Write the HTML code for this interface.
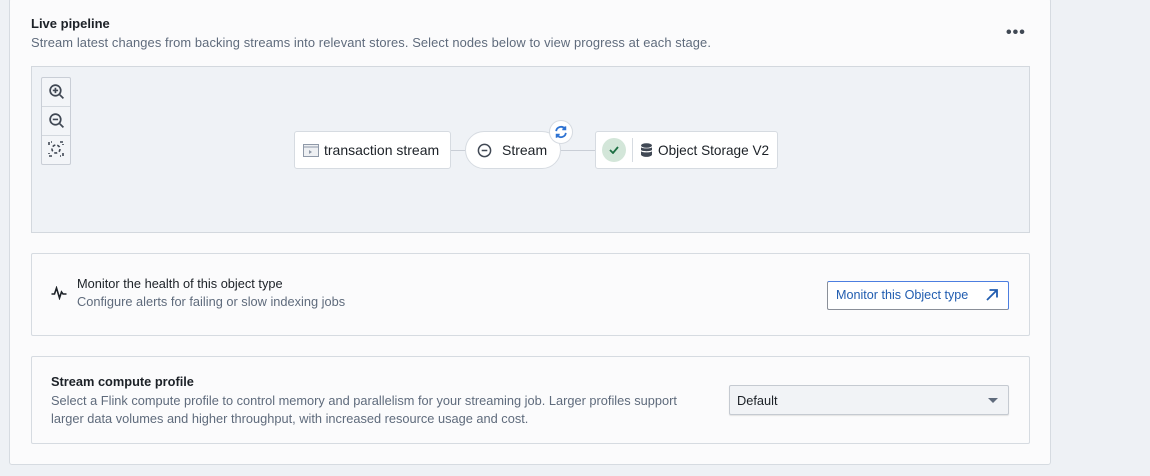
<!DOCTYPE html>
<html><head><style>
*{box-sizing:border-box;margin:0;padding:0}
body{width:1150px;height:476px;background:#eef1f5;font-family:"Liberation Sans",sans-serif;color:#1c2127;position:relative;overflow:hidden;font-size:13px}
.a{position:absolute}
.card{left:9px;top:-2px;width:1042px;height:467px;background:#fbfbfc;border:1px solid #d6dbe1;border-radius:3px}
.box{background:#fbfbfc;border:1px solid #d6dbe1;border-radius:2px}
.muted{color:#5f6b7c}
.node{background:#fff;border:1px solid #d6dbe1;border-radius:3px;display:flex;align-items:center;font-size:14px}
</style></head><body>
<div class="a card"></div>
<div class="a" style="left:31px;top:16px;font-weight:bold;font-size:13px">Live pipeline</div>
<div class="a muted" style="left:31px;top:35px;font-size:12.9px;letter-spacing:0.1px">Stream latest changes from backing streams into relevant stores. Select nodes below to view progress at each stage.</div>
<div class="a" style="left:1006px;top:24px;font-size:16px;font-weight:bold;letter-spacing:1px;color:#404854">•••</div>

<div class="a" style="left:31px;top:66px;width:999px;height:167px;background:#eff2f6;border:1px solid #d3d8de"></div>
<div class="a" style="left:41px;top:77px;width:30px;height:88px;background:#f3f5f8;border:1px solid #c9ced6;border-radius:2px"></div>
<div class="a" style="left:42px;top:106px;width:28px;height:1px;background:#d3d8de"></div>
<div class="a" style="left:42px;top:135px;width:28px;height:1px;background:#d3d8de"></div>
<svg class="a" style="left:48px;top:83px" width="17" height="17" viewBox="0 0 16 16" fill="none" stroke="#404854" stroke-width="1.6"><circle cx="7" cy="7" r="5"/><path d="M11 11l3.5 3.5M4.5 7h5M7 4.5v5"/></svg>
<svg class="a" style="left:48px;top:112px" width="17" height="17" viewBox="0 0 16 16" fill="none" stroke="#404854" stroke-width="1.6"><circle cx="7" cy="7" r="5"/><path d="M11 11l3.5 3.5M4.5 7h5"/></svg>
<svg class="a" style="left:48px;top:141px" width="16" height="16" viewBox="0 0 16 16" fill="none" stroke="#404854" stroke-width="1.6" stroke-dasharray="3 2"><path d="M1 4V1h3M12 1h3v3M15 12v3h-3M4 15H1v-3"/><circle cx="8" cy="8" r="4"/></svg>

<div class="a" style="left:450px;top:150px;width:145px;height:1px;background:#c9ced6"></div>
<div class="a node" style="left:294px;top:131px;width:157px;height:38px;padding-left:8px">
<svg width="16" height="13" viewBox="0 0 16 13"><rect x="0.5" y="0.5" width="15" height="12" fill="#eef0f3" stroke="#8f99a8"/><path d="M0.5 3h15" stroke="#8f99a8"/><path d="M6 6l3 2-3 2z" fill="#8f99a8"/></svg>
<span style="margin-left:5px">transaction stream</span></div>
<div class="a node" style="left:465px;top:131px;width:96px;height:38px;border-radius:19px;padding-left:11px">
<svg width="15" height="15" viewBox="0 0 16 16" fill="none" stroke="#404854" stroke-width="1.6"><circle cx="8" cy="8" r="6.5"/><path d="M5 8h6"/></svg>
<span style="margin-left:10px">Stream</span></div>
<div class="a" style="left:549px;top:120px;width:24px;height:24px;border-radius:50%;background:#fff;border:1px solid #d6dbe1"></div>
<svg class="a" style="left:554px;top:125px" width="14" height="14" viewBox="0 0 16 16" fill="none" stroke="#2d72d2" stroke-width="2"><path d="M2.5 7A5.5 5.5 0 0 1 12.5 4.5M13.5 9A5.5 5.5 0 0 1 3.5 11.5"/><path d="M13 1.5v3.5h-3.5M3 14.5V11h3.5"/></svg>
<div class="a node" style="left:595px;top:131px;width:183px;height:38px;padding-left:6px;font-size:13.6px">
<div style="width:24px;height:24px;border-radius:50%;background:#d3e6d9;display:flex;align-items:center;justify-content:center"><svg width="10" height="8" viewBox="0 0 10 8" fill="none" stroke="#1c6e42" stroke-width="1.8"><path d="M1 4l3 3 5-6"/></svg></div>
<div style="width:1px;height:24px;background:#d6dbe1;margin-left:6px"></div>
<svg style="margin-left:8px" width="11" height="14" viewBox="0 0 11 14" fill="#404854"><ellipse cx="5.5" cy="2.5" rx="5.5" ry="2.3"/><path d="M0 4.2c1 1.6 10 1.6 11 0V7c-1 1.6-10 1.6-11 0zM0 8.2c1 1.6 10 1.6 11 0v3.3c0 1.3-2.5 2.4-5.5 2.4S0 12.8 0 11.5z"/></svg>
<span style="margin-left:6px">Object Storage V2</span></div>

<div class="a box" style="left:31px;top:253px;width:999px;height:83px"></div>
<svg class="a" style="left:51px;top:286px" width="16" height="14" viewBox="0 0 16 14" fill="none" stroke="#1c2127" stroke-width="1.6"><path d="M0.5 8h3l2-6 3 10 2-6 1.5 2h3.5"/></svg>
<div class="a" style="left:77px;top:276px;font-size:12.8px">Monitor the health of this object type</div>
<div class="a muted" style="left:77px;top:294px;font-size:12.8px">Configure alerts for failing or slow indexing jobs</div>
<div class="a" style="left:827px;top:281px;width:182px;height:29px;border:1px solid #4c7ee0;border-bottom-color:#8a8f98;border-left-color:#8a8f98;border-radius:2px;background:#fff"></div>
<div class="a" style="left:836px;top:288px;font-size:12.6px;color:#215db0">Monitor this Object type</div>
<svg class="a" style="left:985px;top:288px" width="14" height="14" viewBox="0 0 14 14" fill="none" stroke="#215db0" stroke-width="1.8"><path d="M2 12L12 2M4.5 2H12v7.5"/></svg>

<div class="a box" style="left:31px;top:356px;width:999px;height:88px"></div>
<div class="a" style="left:51px;top:374px;font-weight:bold;font-size:12.8px">Stream compute profile</div>
<div class="a muted" style="left:51px;top:392px;font-size:12.8px;line-height:18px;width:655px">Select a Flink compute profile to control memory and parallelism for your streaming job. Larger profiles support larger data volumes and higher throughput, with increased resource usage and cost.</div>
<div class="a" style="left:729px;top:385px;width:280px;height:30px;background:#f1f3f6;border:1px solid #c5cad1;border-radius:2px;box-shadow:0 1px 1px rgba(0,0,0,.1)"></div>
<div class="a" style="left:737px;top:393px;font-size:12.8px">Default</div>
<div class="a" style="left:988px;top:398px;width:0;height:0;border-left:5px solid transparent;border-right:5px solid transparent;border-top:5px solid #5f6b7c"></div>
</body></html>
